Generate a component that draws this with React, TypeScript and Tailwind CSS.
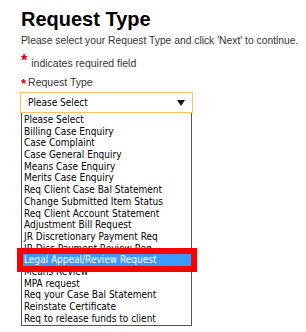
const options = [
  "Please Select",
  "Billing Case Enquiry",
  "Case Complaint",
  "Case General Enquiry",
  "Means Case Enquiry",
  "Merits Case Enquiry",
  "Req Client Case Bal Statement",
  "Change Submitted Item Status",
  "Req Client Account Statement",
  "Adjustment Bill Request",
  "JR Discretionary Payment Req",
  "JR Disc Payment Review Req",
  "Legal Appeal/Review Request",
  "Means Review",
  "MPA request",
  "Req your Case Bal Statement",
  "Reinstate Certificate",
  "Req to release funds to client",
];

export default function App() {
  const selected = "Legal Appeal/Review Request";

  return (
    <div className="relative w-[306px] h-[332px] overflow-hidden bg-white pl-[21px] pt-[6px] font-['Liberation_Sans',Arial,sans-serif] text-[#222]">
      <h1 className="text-[20px] leading-[26px] font-black text-black">Request Type</h1>
      <p className="mt-[2px] text-[10.3px] leading-[13px] text-[#333]">
        Please select your Request Type and click 'Next' to continue.
      </p>
      <p className="mt-[8px] flex items-start text-[10.5px] leading-[13px] text-[#333]">
        <span className="text-[#d0021b] text-[16px] leading-[12px] font-bold mr-[4px]">*</span>
        <span className="mt-[2px]">indicates required field</span>
      </p>
      <p className="mt-[6px] flex items-end text-[10.5px] leading-[13px] text-[#333]">
        <span className="text-[#d0021b] text-[13px] leading-[11px] font-bold mr-[2px]">*</span>
        Request Type
      </p>
      <div className="mt-[3px] w-[173px] -ml-[1px]">
        <div className="flex h-[21px] items-center justify-between border border-[#f3c46b] bg-white pl-[7px] pr-[7px] text-[10px] text-black font-['DejaVu_Sans_Condensed','DejaVu_Sans',Verdana,sans-serif]">
          <span>Please Select</span>
          <svg width="8" height="6" viewBox="0 0 8 6">
            <path d="M0 0H8L4 6Z" fill="#111" />
          </svg>
        </div>
        <ul className="ml-[1px] w-[171px] border border-[#555] border-t-0 bg-white py-[1px] font-['DejaVu_Sans_Condensed','DejaVu_Sans',Verdana,sans-serif] text-[10px] text-black">
          {options.map((o) => (
            <li
              key={o}
              className={
                "h-[11.7px] leading-[11.7px] pl-[2px] whitespace-nowrap " +
                (o === selected ? "bg-[#3c99ff] text-white" : "")
              }
            >
              {o}
            </li>
          ))}
        </ul>
      </div>
      <div className="absolute left-[17px] top-[248px] w-[180px] h-[24px] border-[6px] border-[#ff0000]" />
    </div>
  );
}
